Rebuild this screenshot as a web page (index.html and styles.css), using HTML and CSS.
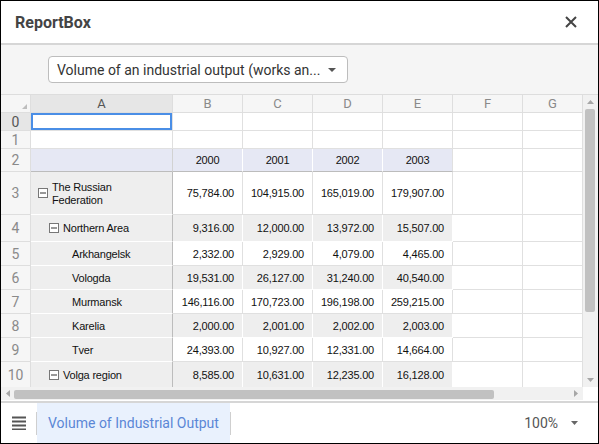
FILE: index.html
```html
<!DOCTYPE html>
<html lang="en">
<head>
  <meta charset="UTF-8">
  <meta name="viewport" content="width=device-width, initial-scale=1.0">
  <title>ReportBox</title>
  <link rel="stylesheet" href="styles.css">
</head>
<body>
  <div class="window">
    <header class="titlebar">
      <span class="title">ReportBox</span>
      <svg class="close" width="12" height="12" viewBox="0 0 12 12">
        <path d="M1 1L11 11M11 1L1 11" stroke="#444" stroke-width="2"/>
      </svg>
    </header>

    <div class="toolbar">
      <div class="select">
        <span>Volume of an industrial output (works an...</span>
        <svg width="8" height="4" viewBox="0 0 8 4"><path d="M0 0h8L4 4z" fill="#555"/></svg>
      </div>
    </div>

    <div class="grid">
      <div class="grid-top">
        <div class="sheet">
          <div class="row head">
            <div class="corner-cell"><span class="tri"></span></div>
            <div class="col-h active">A</div>
            <div class="col-h">B</div>
            <div class="col-h">C</div>
            <div class="col-h">D</div>
            <div class="col-h">E</div>
            <div class="col-h">F</div>
            <div class="col-h">G</div>
          </div>
          <div class="row r-small">
            <div class="rh active">0</div>
            <div class="selected"></div>
            <div></div><div></div><div></div><div></div><div></div><div></div>
          </div>
          <div class="row r-small">
            <div class="rh">1</div>
            <div></div><div></div><div></div><div></div><div></div><div></div><div></div>
          </div>
          <div class="row r-years">
            <div class="rh">2</div>
            <div class="yr yr-first"></div>
            <div class="yr">2000</div>
            <div class="yr">2001</div>
            <div class="yr">2002</div>
            <div class="yr yr-last">2003</div>
            <div></div><div></div>
          </div>
          <div class="row r-tall">
            <div class="rh">3</div>
            <div class="name lvl0"><svg class="tg" width="10" height="10" viewBox="0 0 10 10"><rect x="0.5" y="0.5" width="9" height="9" fill="#fff" stroke="#777"/><path d="M2 5h6" stroke="#333"/></svg><span class="wrap">The Russian<br>Federation</span></div>
            <div class="num">75,784.00</div>
            <div class="num">104,915.00</div>
            <div class="num">165,019.00</div>
            <div class="num">179,907.00</div>
            <div></div><div></div>
          </div>
          <div class="row r-mid alt">
            <div class="rh">4</div>
            <div class="name lvl1"><svg class="tg" width="10" height="10" viewBox="0 0 10 10"><rect x="0.5" y="0.5" width="9" height="9" fill="#fff" stroke="#777"/><path d="M2 5h6" stroke="#333"/></svg>Northern Area</div>
            <div class="num">9,316.00</div>
            <div class="num">12,000.00</div>
            <div class="num">13,972.00</div>
            <div class="num">15,507.00</div>
            <div></div><div></div>
          </div>
          <div class="row">
            <div class="rh">5</div>
            <div class="name lvl2">Arkhangelsk</div>
            <div class="num">2,332.00</div>
            <div class="num">2,929.00</div>
            <div class="num">4,079.00</div>
            <div class="num">4,465.00</div>
            <div></div><div></div>
          </div>
          <div class="row alt">
            <div class="rh">6</div>
            <div class="name lvl2">Vologda</div>
            <div class="num">19,531.00</div>
            <div class="num">26,127.00</div>
            <div class="num">31,240.00</div>
            <div class="num">40,540.00</div>
            <div></div><div></div>
          </div>
          <div class="row">
            <div class="rh">7</div>
            <div class="name lvl2">Murmansk</div>
            <div class="num">146,116.00</div>
            <div class="num">170,723.00</div>
            <div class="num">196,198.00</div>
            <div class="num">259,215.00</div>
            <div></div><div></div>
          </div>
          <div class="row alt">
            <div class="rh">8</div>
            <div class="name lvl2">Karelia</div>
            <div class="num">2,000.00</div>
            <div class="num">2,001.00</div>
            <div class="num">2,002.00</div>
            <div class="num">2,003.00</div>
            <div></div><div></div>
          </div>
          <div class="row">
            <div class="rh">9</div>
            <div class="name lvl2">Tver</div>
            <div class="num">24,393.00</div>
            <div class="num">10,927.00</div>
            <div class="num">12,331.00</div>
            <div class="num">14,664.00</div>
            <div></div><div></div>
          </div>
          <div class="row r-last alt">
            <div class="rh">10</div>
            <div class="name lvl1"><svg class="tg" width="10" height="10" viewBox="0 0 10 10"><rect x="0.5" y="0.5" width="9" height="9" fill="#fff" stroke="#777"/><path d="M2 5h6" stroke="#333"/></svg>Volga region</div>
            <div class="num">8,585.00</div>
            <div class="num">10,631.00</div>
            <div class="num">12,235.00</div>
            <div class="num">16,128.00</div>
            <div></div><div></div>
          </div>
        </div>

        <div class="vscroll">
          <div class="arrow"><svg width="7" height="4" viewBox="0 0 7 4"><path d="M0 4h7L3.5 0z" fill="#a6a6a6"/></svg></div>
          <div class="vthumb"></div>
          <div class="arrow end"><svg width="7" height="4" viewBox="0 0 7 4"><path d="M0 0h7L3.5 4z" fill="#a6a6a6"/></svg></div>
        </div>
      </div>

      <div class="grid-bottom">
        <div class="hscroll">
          <div class="harrow"><svg width="4" height="7" viewBox="0 0 4 7"><path d="M4 0v7L0 3.5z" fill="#a6a6a6"/></svg></div>
          <div class="hthumb"></div>
          <div class="harrow end"><svg width="4" height="7" viewBox="0 0 4 7"><path d="M0 0v7L4 3.5z" fill="#a6a6a6"/></svg></div>
        </div>
        <div class="corner"></div>
      </div>
    </div>

    <footer class="footer">
      <div class="menu">
        <svg width="14" height="14" viewBox="0 0 14 14">
          <path d="M0 1.5h14M0 5.5h14M0 9.5h14M0 13.5h14" stroke="#555" stroke-width="2"/>
        </svg>
      </div>
      <div class="sep"></div>
      <div class="tab">Volume of Industrial Output</div>
      <div class="sep"></div>
      <div class="zoom">
        <span>100%</span>
        <svg width="7" height="4" viewBox="0 0 7 4"><path d="M0 0h7L3.5 4z" fill="#666"/></svg>
      </div>
    </footer>
  </div>
</body>
</html>
```

FILE: styles.css
```css
* {
  box-sizing: border-box;
}
body {
  margin: 0;
  font-family: Roboto, "Liberation Sans", sans-serif;
  background: #fff;
}
.window {
  width: 599px;
  height: 444px;
  border: 1px solid #000;
  display: flex;
  flex-direction: column;
  overflow: hidden;
  background: #fff;
}

/* title */
.titlebar {
  flex: none;
  height: 44px;
  display: flex;
  align-items: center;
  justify-content: space-between;
  padding: 0 21px 0 14px;
  border-bottom: 2px solid #d6d6d6;
}
.title {
  font-size: 16px;
  font-weight: 700;
  color: #444;
}

/* toolbar */
.toolbar {
  flex: none;
  height: 50px;
  padding: 11px 0 0 47px;
  background: #f5f5f5;
  border-bottom: 1px solid #ddd;
}
.select {
  width: 300px;
  height: 27px;
  display: flex;
  align-items: center;
  justify-content: space-between;
  padding: 0 11px 0 8px;
  background: #fff;
  border: 1px solid #bdbdbd;
  border-radius: 4px;
  font-size: 14px;
  color: #333;
}

/* grid */
.grid {
  flex: none;
  display: flex;
  flex-direction: column;
}
.grid-top {
  display: flex;
  height: 292px;
}
.sheet {
  width: 582px;
  overflow: hidden;
}
.row {
  display: grid;
  grid-template-columns: 30px 142px repeat(5, 70px) 60px;
  height: 24px;
}
.row > div {
  display: flex;
  align-items: center;
  border-right: 1px solid #e0e0e0;
  border-bottom: 1px solid #e0e0e0;
  font-family: "Liberation Sans", Arial, sans-serif;
  font-size: 11px;
  letter-spacing: -0.2px;
  color: #111;
}
.row.head,
.row.r-small {
  height: 18px;
}
.row.r-years {
  height: 23px;
}
.row.r-tall {
  height: 43px;
}
.row.r-mid {
  height: 27px;
}
.row.r-last {
  height: 26px;
}

.row > .corner-cell,
.row > .col-h,
.row > .rh {
  justify-content: center;
  background: #f6f6f6;
  border-color: #dedede;
  font-family: Roboto, sans-serif;
  font-size: 13px;
  letter-spacing: 0;
  color: #8a8a8a;
}
.row > .rh {
  font-size: 14px;
}
.row > .corner-cell {
  align-items: flex-end;
  justify-content: flex-end;
  padding: 0 3px 3px 0;
}
.tri {
  width: 0;
  height: 0;
  border-left: 5px solid transparent;
  border-bottom: 5px solid #bdbdbd;
}
.row > .active {
  background: #e6e6e6;
  color: #555;
}
.row > .selected {
  box-shadow: inset 0 0 0 2px #4a8ee6;
}

.row > .yr {
  justify-content: center;
  background: #e6e8f4;
  border-right-color: #fff;
  border-bottom-color: #bcbcbc;
}
.row > .yr-first {
  border-right-color: #d2d2d2;
}
.row > .yr-last {
  border-right-color: #e0e0e0;
}

.row > .name {
  background: #eee;
  border-right-color: #bcbcbc;
  border-bottom-color: #fff;
}
.lvl0 {
  padding-left: 7px;
}
.lvl1 {
  padding-left: 18px;
}
.lvl2 {
  padding-left: 41px;
}
.tg {
  flex: none;
  margin-right: 4px;
}
.wrap {
  line-height: 13px;
  padding-top: 1px;
}

.row > .num {
  justify-content: flex-end;
  padding-right: 8px;
}
.row.alt > .num {
  background: #eee;
  border-color: #fff;
}

/* scrollbars */
.vscroll {
  width: 15px;
  display: flex;
  flex-direction: column;
  background: #f1f1f1;
}
.arrow {
  height: 14px;
  display: flex;
  align-items: center;
  justify-content: center;
}
.arrow.end {
  margin-top: auto;
}
.vthumb {
  width: 10px;
  height: 203px;
  margin-left: 2px;
  background: #c1c1c1;
  border-radius: 2px;
}
.grid-bottom {
  display: flex;
  height: 14px;
}
.hscroll {
  width: 582px;
  height: 13px;
  display: flex;
  background: #f1f1f1;
}
.harrow {
  width: 13px;
  display: flex;
  align-items: center;
  justify-content: center;
}
.harrow.end {
  width: 14px;
  margin-left: auto;
}
.hthumb {
  width: 480px;
  height: 9px;
  margin-top: 3px;
  background: #c1c1c1;
  border-radius: 2px;
}
.corner {
  flex: 1;
}

/* footer */
.footer {
  flex: 1;
  display: flex;
  align-items: stretch;
  border-top: 2px solid #d6d6d6;
}
.menu {
  width: 35px;
  display: flex;
  align-items: center;
  justify-content: center;
}
.sep {
  width: 1px;
  height: 23px;
  align-self: center;
  background: #cfcfcf;
}
.tab {
  width: 193px;
  display: flex;
  align-items: center;
  padding-left: 11px;
  background: #e9f1fd;
  color: #5b87d6;
  font-size: 14px;
  white-space: nowrap;
}
.zoom {
  margin-left: auto;
  display: flex;
  align-items: center;
  gap: 13px;
  padding-right: 20px;
  font-size: 14px;
  color: #555;
}
```
